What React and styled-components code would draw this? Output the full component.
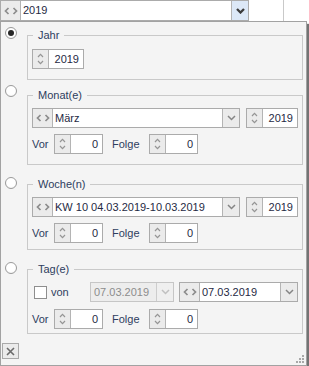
import React from 'react'
import styled, { createGlobalStyle } from 'styled-components'

const GlobalStyle = createGlobalStyle`
  html, body {
    margin: 0;
    padding: 0;
    background: #fff;
  }
  body {
    font-family: "Liberation Sans", Arial, sans-serif;
    font-size: 11px;
    color: #2b3a5a;
  }
`

const Screen = styled.div`
  width: 309px;
  height: 366px;
  position: relative;
  overflow: hidden;
  background: #fff;
`

const TopBar = styled.div`
  height: 21px;
  display: flex;
`

const TopDivider = styled.div`
  margin-left: 34px;
  width: 0;
  height: 21px;
  border-left: 1px solid #c9c9c9;
`

const Panel = styled.div`
  width: 307px;
  height: 345px;
  box-sizing: border-box;
  border: 1px solid #a2a2a2;
  background: #f4f4f4;
  box-shadow: 2px 3px 1px rgba(0, 0, 0, 0.55);
  display: flex;
  flex-direction: column;
  position: relative;
`

const Section = styled.div`
  display: flex;
  align-items: flex-start;
  margin-top: ${p => p.$mt}px;
`

const Radio = styled.span`
  flex: none;
  width: 12px;
  height: 12px;
  box-sizing: border-box;
  margin-left: 4px;
  margin-top: ${p => p.$dy}px;
  border-radius: 50%;
  border: 1px solid #9a9a9a;
  background: radial-gradient(circle at 50% 40%, #ffffff 55%, #e9e9e9 100%);
  display: flex;
  align-items: center;
  justify-content: center;
  &::after {
    content: '';
    display: ${p => (p.$checked ? 'block' : 'none')};
    width: 6px;
    height: 6px;
    border-radius: 50%;
    background: #262626;
  }
`

const Group = styled.fieldset`
  flex: 1;
  min-width: 0;
  margin: 0 3px 0 10px;
  border: 1px solid #c9c9c9;
  padding: ${p => p.$pad};
  display: flex;
  flex-direction: column;
  gap: ${p => p.$gap || 6}px;
`

const Legend = styled.legend`
  padding: 0 5px;
  margin-left: 1px;
  font-size: 11px;
  line-height: 13px;
  color: #2e3d5e;
`

const Row = styled.div`
  display: flex;
  align-items: center;
  height: 20px;
`

const Label = styled.span`
  width: ${p => p.$w}px;
  flex: none;
  color: #2e3d5e;
  line-height: 20px;
`

const Box = styled.div`
  display: flex;
  flex: none;
  width: ${p => p.$w}px;
  height: 20px;
  box-sizing: border-box;
  border: 1px solid ${p => (p.$disabled ? '#c6c6c6' : '#ababab')};
  background: ${p => (p.$disabled ? '#ededed' : '#fff')};
  margin-left: ${p => p.$ml || 0}px;
`

const SideButton = styled.div`
  flex: none;
  width: ${p => p.$w}px;
  height: 100%;
  box-sizing: border-box;
  background: ${p => (p.$active ? '#dce8f7' : p.$disabled ? '#efefef' : '#ebebeb')};
  border-${p => (p.$right ? 'left' : 'right')}: 1px solid ${p => (p.$disabled ? '#cdcdcd' : '#b4b4b4')};
  display: flex;
  align-items: center;
  justify-content: center;
  flex-direction: ${p => (p.$column ? 'column' : 'row')};
  gap: ${p => (p.$column ? 2 : 0)}px;
`

const Value = styled.div`
  flex: 1;
  min-width: 0;
  padding: 0 ${p => (p.$right ? 4 : 2)}px 0 ${p => (p.$right ? 2 : 2)}px;
  text-align: ${p => (p.$right ? 'right' : 'left')};
  line-height: 18px;
  white-space: nowrap;
  overflow: hidden;
  color: ${p => (p.$disabled ? '#8c8c8c' : '#1f2a44')};
`

const Check = styled.span`
  flex: none;
  width: 13px;
  height: 13px;
  box-sizing: border-box;
  margin-left: 2px;
  border: 1px solid #8e8e8e;
  background: #fff;
`

const CloseButton = styled.div`
  width: 17px;
  height: 16px;
  box-sizing: border-box;
  margin: 9px 0 0 1px;
  border: 1px solid #a9a9a9;
  background: #ebebeb;
  display: flex;
  align-items: center;
  justify-content: center;
`

const Grip = styled.svg`
  position: absolute;
  right: 1px;
  bottom: 1px;
`

const LeftRight = () => (
  <svg width="14" height="8" viewBox="0 0 14 8">
    <polyline points="4.5,1 1.5,4 4.5,7" fill="none" stroke="#8c8c8c" strokeWidth="1.7" />
    <polyline points="9.5,1 12.5,4 9.5,7" fill="none" stroke="#8c8c8c" strokeWidth="1.7" />
  </svg>
)

const SpinArrows = () => (
  <>
    <svg width="7" height="5" viewBox="0 0 7 5">
      <polyline points="1,4 3.5,1.3 6,4" fill="none" stroke="#959595" strokeWidth="1.2" />
    </svg>
    <svg width="7" height="5" viewBox="0 0 7 5">
      <polyline points="1,1 3.5,3.7 6,1" fill="none" stroke="#959595" strokeWidth="1.2" />
    </svg>
  </>
)

const DownArrow = ({ dark, disabled }) => (
  <svg width="9" height="6" viewBox="0 0 9 6">
    <polyline
      points="1,1 4.5,4.5 8,1"
      fill="none"
      stroke={dark ? '#3b3b3b' : disabled ? '#c0c0c0' : '#858585'}
      strokeWidth={dark ? 2.3 : 1.5}
    />
  </svg>
)

const Spinner = ({ w, value, ml }) => (
  <Box $w={w} $ml={ml}>
    <SideButton $w={16} $column>
      <SpinArrows />
    </SideButton>
    <Value $right>{value}</Value>
  </Box>
)

const Combo = ({ w, value, nav = true, active, disabled, ml }) => (
  <Box $w={w} $ml={ml} $disabled={disabled}>
    {nav && (
      <SideButton $w={20}>
        <LeftRight />
      </SideButton>
    )}
    <Value $disabled={disabled} style={nav ? undefined : { paddingLeft: 3 }}>
      {value}
    </Value>
    <SideButton $w={17} $right $active={active} $disabled={disabled}>
      <DownArrow dark={active} disabled={disabled} />
    </SideButton>
  </Box>
)

const OffsetRow = () => (
  <Row>
    <Label $w={22}>Vor</Label>
    <Spinner w={49} value="0" />
    <Label $w={37} style={{ marginLeft: 9 }}>Folge</Label>
    <Spinner w={49} value="0" />
  </Row>
)

const App = () => (
  <Screen>
    <GlobalStyle />
    <TopBar>
      <Box $w={249} style={{ height: 21 }}>
        <SideButton $w={20}>
          <LeftRight />
        </SideButton>
        <Value style={{ lineHeight: '19px' }}>2019</Value>
        <SideButton $w={17} $right $active>
          <DownArrow dark />
        </SideButton>
      </Box>
      <TopDivider />
    </TopBar>

    <Panel>
      <Section $mt={7}>
        <Radio $checked $dy={-2} />
        <Group $pad="7px 4px 10px">
          <Legend>Jahr</Legend>
          <Row>
            <Spinner w={52} value="2019" />
          </Row>
        </Group>
      </Section>

      <Section $mt={9}>
        <Radio $dy={-4} />
        <Group $pad="6px 4px 10px">
          <Legend>Monat(e)</Legend>
          <Row>
            <Combo w={208} value="März" />
            <Spinner w={52} value="2019" ml={6} />
          </Row>
          <OffsetRow />
        </Group>
      </Section>

      <Section $mt={13}>
        <Radio $dy={-1} />
        <Group $pad="6px 4px 6px">
          <Legend>Woche(n)</Legend>
          <Row>
            <Combo w={208} value="KW 10 04.03.2019-10.03.2019" />
            <Spinner w={52} value="2019" ml={6} />
          </Row>
          <OffsetRow />
        </Group>
      </Section>

      <Section $mt={13}>
        <Radio $dy={-1} />
        <Group $pad="6px 4px 4px" $gap={7}>
          <Legend>Tag(e)</Legend>
          <Row>
            <Check />
            <Label $w={39} style={{ marginLeft: 4 }}>von</Label>
            <Combo w={84} value="07.03.2019" nav={false} disabled />
            <Combo w={119} value="07.03.2019" ml={5} />
          </Row>
          <OffsetRow />
        </Group>
      </Section>

      <CloseButton>
        <svg width="9" height="9" viewBox="0 0 9 9">
          <path d="M1 1 L8 8 M8 1 L1 8" stroke="#6b6b6b" strokeWidth="1.6" />
        </svg>
      </CloseButton>

      <Grip width="10" height="10" viewBox="0 0 10 10">
        {[[8, 2], [5, 5], [8, 5], [2, 8], [5, 8], [8, 8]].map(([x, y]) => (
          <rect key={`${x}-${y}`} x={x - 1} y={y - 1} width="2" height="2" fill="#a8a8a8" />
        ))}
      </Grip>
    </Panel>
  </Screen>
)

export default App
